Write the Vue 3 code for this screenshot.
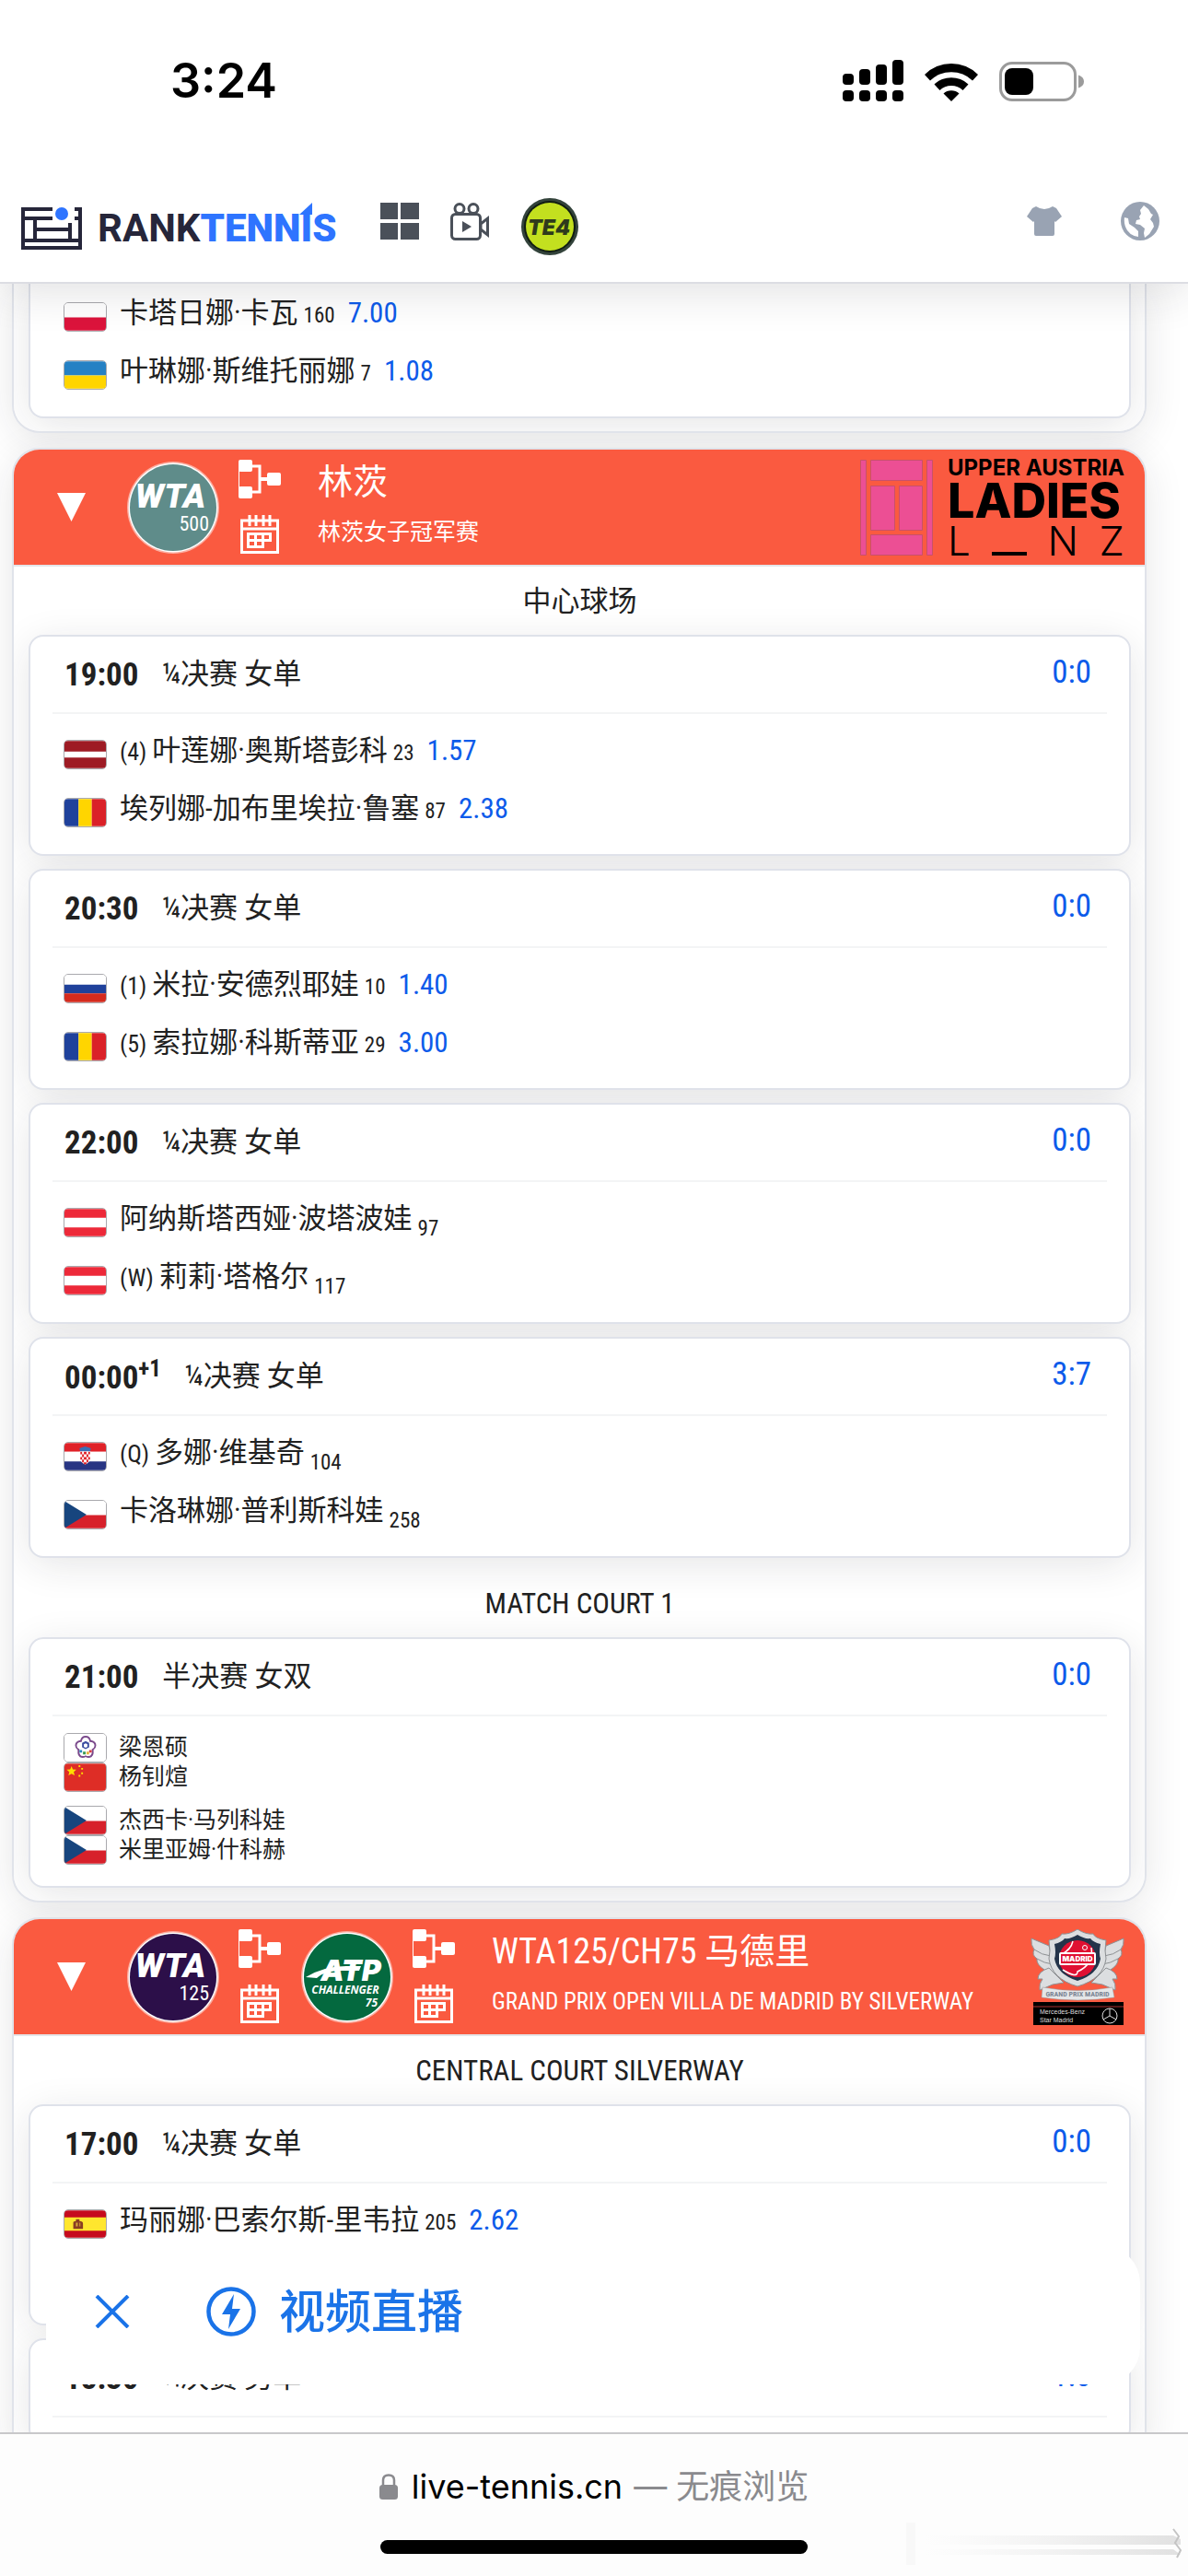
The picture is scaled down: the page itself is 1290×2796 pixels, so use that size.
<template>
  <div class="screen">
    <div class="status">
      <span class="clock">3:24</span>
      <div class="status-icons">
        <svg width="66" height="46" viewBox="0 0 66 46">
          <rect x="0" y="15" width="12" height="12" rx="4" />
          <rect x="18" y="10" width="12" height="17" rx="4" />
          <rect x="36" y="5" width="12" height="22" rx="4" />
          <rect x="54" y="0" width="12" height="27" rx="4" />
          <rect v-for="x in [0, 18, 36, 54]" :key="x" :x="x" y="33" width="12" height="12" rx="4" />
        </svg>
        <svg width="58" height="43" viewBox="0 0 58 43">
          <path d="M0 14a41 41 0 0 1 58 0l-6 6.500a33 33 0 0 0-46 0z" />
          <path d="M10.500 24.500a27 27 0 0 1 37 0l-6 6.500a18 18 0 0 0-25 0z" />
          <path d="M20.500 34.500a13 13 0 0 1 17 0L29 43z" />
        </svg>
        <svg width="92" height="43" viewBox="0 0 92 43">
          <rect x="1.500" y="1.500" width="81" height="40" rx="12.500" fill="none" stroke="#9b9b9b" stroke-width="3" />
          <rect x="6" y="7" width="31" height="29" rx="8" />
          <path d="M86 14.500q6 2 6 7t-6 7z" fill="#9b9b9b" />
        </svg>
      </div>
    </div>

    <header class="topbar">
      <a href="#" class="brand">
        <svg width="66" height="46" viewBox="0 0 66 46" fill="none" stroke="#26263a" stroke-width="4">
          <path d="M34 2H2v42h62V2H58M2 12h32M58 12h6M2 36h62M15 12v24M15 24h38M53 17v19" />
          <circle cx="44" cy="7" r="7" fill="#2e74ff" stroke="none" />
        </svg>
        <span class="wordmark">RANK<b>TENNIS</b>
          <svg class="pennant" width="14" height="13" viewBox="0 0 14 13"><path d="M14 0v13H0z" fill="#2e74ff" /></svg>
        </span>
      </a>
      <button class="icon-btn grid-btn" aria-label="grid">
        <svg width="42" height="40" viewBox="0 0 42 40" fill="#4a5059">
          <path d="M0 0h19v18H0zM22 0h20v18H22zM0 22h19v18H0zM22 22h20v18H22z" />
        </svg>
      </button>
      <button class="icon-btn camera-btn" aria-label="video">
        <svg width="42" height="41" viewBox="0 0 42 41" fill="none" stroke="#4a5059" stroke-width="3">
          <circle cx="10" cy="6.500" r="5" />
          <circle cx="25" cy="6.500" r="5" />
          <rect x="1.500" y="12.500" width="31" height="27" rx="4" />
          <path d="M33 23l7.500-6v18L33 29z" />
          <path d="M13 20l10 6-10 6z" fill="#4a5059" stroke="none" />
        </svg>
      </button>
      <button class="icon-btn te4-btn" aria-label="TE4">
        <svg width="64" height="64" viewBox="0 0 64 64">
          <circle cx="32" cy="32" r="31" fill="#33433b" />
          <circle cx="32" cy="32" r="28" fill="#111d12" />
          <circle cx="32" cy="32" r="26" fill="#c3e01f" />
          <text x="31" y="41" text-anchor="middle" class="te4">TE4</text>
        </svg>
      </button>
      <span class="spacer"></span>
      <button class="icon-btn shirt-btn" aria-label="theme">
        <svg width="38" height="32" viewBox="0 0 38 32" fill="#99a3b3">
          <path d="M10 0q9 6 18 0l4 2 6 9-7 6-1-1v14q0 2-2 2H10q-2 0-2-2V16l-1 1-7-6 6-9z" />
        </svg>
      </button>
      <button class="icon-btn" aria-label="language">
        <svg width="42" height="42" viewBox="0 0 42 42">
          <circle cx="21" cy="21" r="21" fill="#99a3b3" />
          <path d="M25 4l5 4 3 5 2 1-3 5 3 4 1 4-5 8-5 4-1-5 1-5-5-4-5-1 1-4 4-1-1-3 2-3-1-4z" fill="#fff" />
          <path d="M4 17l4 1 1 6 6 4 4 4v6q-8-1-12-7t-3-14z" fill="#fff" />
        </svg>
      </button>
    </header>

    <main class="page">
      <section v-for="(event, e) in events" :key="e" class="event" :class="{ continued: !event.title }">
        <div v-if="event.title" class="event-head">
          <button class="toggle" aria-label="collapse">
            <svg width="31" height="31" viewBox="0 0 31 31"><path d="M0 0h31L15.500 31z" fill="#fff" /></svg>
          </button>
          <div class="tours">
            <div v-for="tour in event.tours" :key="tour.name" class="tour">
              <svg width="100" height="100" viewBox="0 0 100 100">
                <circle cx="50" cy="50" r="50" fill="#fff" fill-opacity=".5" />
                <circle cx="50" cy="50" r="48.500" fill="#fff" />
                <circle cx="50" cy="50" r="47" :fill="tour.color" />
                <template v-if="tour.name === 'WTA'">
                  <text x="47" y="50" text-anchor="middle" class="wta">WTA</text>
                  <text x="89" y="75" text-anchor="end" class="level">{{ tour.level }}</text>
                </template>
                <template v-else>
                  <path d="M5 50q20-12 44-12h16l-2 5H45q-20 0-28 8z" fill="#fff" />
                  <text x="54" y="54" text-anchor="middle" class="atp">ATP</text>
                  <text x="48" y="68" text-anchor="middle" class="challenger">CHALLENGER</text>
                  <text x="83" y="82" text-anchor="end" class="challenger">{{ tour.level }}</text>
                </template>
              </svg>
              <div class="tour-links">
                <a href="#" aria-label="draw">
                  <svg width="46" height="42" viewBox="0 0 46 42" fill="#fff">
                    <rect width="15" height="13" rx="2" />
                    <rect y="29" width="15" height="13" rx="2" />
                    <rect x="31" y="14" width="15" height="14" rx="2" />
                    <path d="M.500 5v32" fill="none" stroke="#fff" stroke-width="1" />
                    <path d="M15 7h8v28h-8" fill="none" stroke="#fff" stroke-width="3" />
                    <path d="M23 21h8" stroke="#fff" stroke-width="4" />
                  </svg>
                </a>
                <a href="#" aria-label="schedule">
                  <svg width="46" height="42" viewBox="0 0 46 42" fill="none" stroke="#fff" stroke-width="3">
                    <path d="M3.500 6h39v34.500h-39zM3.500 15h39M12 0v12M19 0v12M27 0v12M34 0v12" />
                    <path d="M10.500 20.500h24v7h-8v7h-16zM10.500 27.500h16M18.500 20.500v14M26.500 20.500v7" />
                  </svg>
                </a>
              </div>
            </div>
          </div>
          <div class="titles">
            <h2>{{ event.title }}</h2>
            <p>{{ event.subtitle }}</p>
          </div>

          <div v-if="event.logo === 'linz'" class="linz">
            <svg width="79" height="104" viewBox="0 0 79 104" fill="#ec4f94" stroke="#c9506a" stroke-width="1">
              <path d="M.500.500h6v103h-6zM72.500.500h6v103h-6zM11.500.500h56v22h-56zM11.500 28.500h26v48h-26zM42.500 28.500h25v48h-25zM11.500 81.500h56v22h-56z" />
            </svg>
            <div class="linz-text">
              <span class="linz-top">UPPER AUSTRIA</span>
              <span class="linz-mid">LADIES</span>
              <span class="linz-low"><i>L</i><i class="dash"></i><i>N</i><i>Z</i></span>
            </div>
          </div>

          <svg v-if="event.logo === 'madrid'" width="102" height="104" viewBox="0 0 102 104">
            <g fill="#dcdee0" stroke="#8e9194" stroke-width="1">
              <path d="M1 10l19 8 7 30-8 2-4-6q-9-6-8-12Q1 28 4 22Q0 17 1 10z" />
              <path d="M101 10l-19 8-7 30 8 2 4-6q9-6 8-12 6-4 3-10 4-5 3-12z" />
              <path d="M20 42Q8 46 8 54h5q-4 5-3 12l14-6 12-2zM82 42q12 4 12 12h-5q4 5 3 12l-14-6-12-2z" />
              <path d="M4 22q8 6 18 7M7 32q8 5 17 6M98 22q-8 6-18 7M95 32q-8 5-17 6" fill="none" />
              <path d="M51 0q9 6 17 5 2 5 14 7-2 12 0 20-3 22-31 30Q23 54 20 32q2-8 0-20 12-2 14-7 8 1 17-5z" />
            </g>
            <path d="M51 6q8 5 14 4 3 4 11 6-2 10 0 16-3 17-25 24-22-7-25-24 2-6 0-16 8-2 11-6 6 1 14-4z" fill="#24344a" />
            <circle cx="51" cy="32" r="20" fill="#e01032" />
            <path d="M35 44q16 10 16 2 18-8 15-26M34 27q10-5 12-14" fill="none" stroke="#fff" stroke-width="1.500" />
            <circle cx="59" cy="20" r="2.500" fill="none" stroke="#fff" />
            <rect x="31" y="25" width="40" height="14" rx="2" fill="#fff" />
            <rect x="33" y="27" width="36" height="10" fill="#e01032" />
            <text x="51" y="35" text-anchor="middle" class="madrid-name">MADRID</text>
            <path d="M13 63q38 7 76 0l2 11q-40 6-79 0z" fill="#e4e6e8" stroke="#999" stroke-width=".500" />
            <text x="51" y="73" text-anchor="middle" class="madrid-ribbon">GRAND PRIX MADRID</text>
            <path d="M3 79h98v25H3z" />
            <path d="M3 84h98" stroke="#a33" stroke-width="1" />
            <text x="10" y="92" class="madrid-sponsor">Mercedes-Benz</text>
            <text x="10" y="101" class="madrid-sponsor">Star Madrid</text>
            <path d="M86 86v8l-7 4M86 94l7 4" fill="none" stroke="#ddd" />
            <circle cx="86" cy="94" r="8" fill="none" stroke="#ddd" />
          </svg>
        </div>

        <div class="event-body">
          <template v-for="(court, c) in event.courts" :key="c">
            <h3 v-if="court.name" class="court">{{ court.name }}</h3>
            <article v-for="(match, m) in court.matches" :key="m" class="match">
              <div v-if="match.time" class="match-head">
                <span class="time">{{ match.time }}<sup v-if="match.nextDay">+1</sup></span>
                <span class="round">{{ match.round }}</span>
                <a href="#" class="score">{{ match.h2h }}</a>
              </div>
              <div v-if="match.pairs" class="pairs">
                <div v-for="(pair, p) in match.pairs" :key="p" class="pair">
                  <div v-for="player in pair" :key="player.name" class="partner">
                    <svg class="flag" width="47" height="32" viewBox="0 0 47 31">
                      <path v-for="(shape, s) in flags[player.flag]" :key="s" :d="shape[1]" :fill="shape[0]" />
                    </svg>
                    <span>{{ player.name }}</span>
                  </div>
                </div>
              </div>
              <div v-else class="players">
                <div v-for="player in match.players" :key="player.name" class="player">
                  <svg class="flag" width="47" height="32" viewBox="0 0 47 31">
                    <path v-for="(shape, s) in flags[player.flag]" :key="s" :d="shape[1]" :fill="shape[0]" />
                  </svg>
                  <div class="player-line">
                    <span v-if="player.seed" class="seed">({{ player.seed }})</span>
                    <span>{{ player.name }}</span>
                    <span class="rank" :class="{ low: !player.odds }">{{ player.rank }}</span>
                    <a v-if="player.odds" href="#" class="odds">{{ player.odds }}</a>
                  </div>
                </div>
              </div>
            </article>
          </template>
        </div>
      </section>

      <div class="live">
        <button class="close" aria-label="close">
          <svg width="38" height="36" viewBox="0 0 38 36"><path d="M2 1l34 34M36 1L2 35" stroke="#1a73e8" stroke-width="4" /></svg>
        </button>
        <a href="#" class="live-link">
          <svg width="54" height="54" viewBox="0 0 54 54">
            <circle cx="27" cy="27" r="24.500" fill="none" stroke="#1a73e8" stroke-width="4.500" />
            <path d="M30 8L17 30h9l-2 16 13-22h-9z" fill="#1a73e8" />
          </svg>
          <span>视频直播</span>
        </a>
      </div>
    </main>

    <footer class="safari">
      <div class="address">
        <svg width="20" height="28" viewBox="0 0 20 28">
          <path d="M4 13V7q0-5.500 6-5.500T16 7v6" fill="none" stroke="#8a8a8e" stroke-width="2.500" />
          <rect y="12" width="20" height="16" rx="3.500" fill="#8a8a8e" />
        </svg>
        <span class="host">live-tennis.cn</span>
        <span class="private">— 无痕浏览</span>
      </div>
      <div class="home"></div>
      <svg class="smudge" width="300" height="46" viewBox="0 0 300 46">
        <defs>
          <linearGradient id="fade">
            <stop offset="0" stop-color="#ddd" stop-opacity="0" />
            <stop offset="1" stop-color="#c4c4c4" />
          </linearGradient>
        </defs>
        <rect width="10" height="46" fill="#f8f8f8" />
        <path d="M20 14h270l8 4v6H20zM20 29h270l8 6H20z" fill="url(#fade)" opacity=".5" />
        <path d="M290 7l6 8-4 7 6 8-4 8" fill="none" stroke="#c4c4c4" stroke-width="2" />
      </svg>
    </footer>
  </div>
</template>

<script setup>
// Each flag is a list of [fill, path] drawn on a 47x31 field
const romania = [
  ["#1f419b", "M0 0h16v31H0z"],
  ["#ffd500", "M16 0h15v31H16z"],
  ["#da2128", "M31 0h16v31H31z"],
];
const flags = {
  pl: [
    ["#fff", "M0 0h47v16H0z"],
    ["#dc143c", "M0 16h47v15H0z"],
  ],
  ua: [
    ["#2581c4", "M0 0h47v16H0z"],
    ["#ffd500", "M0 16h47v15H0z"],
  ],
  lv: [
    ["#9e1b24", "M0 0h47v31H0z"],
    ["#fff", "M0 12h47v7H0z"],
  ],
  ro: romania,
  ru: [
    ["#fff", "M0 0h47v11H0z"],
    ["#1f419b", "M0 11h47v10H0z"],
    ["#d52b1e", "M0 21h47v10H0z"],
  ],
  at: [
    ["#ed2939", "M0 0h47v31H0z"],
    ["#fff", "M0 10h47v11H0z"],
  ],
  hr: [
    ["#e02128", "M0 0h47v10H0z"],
    ["#fff", "M0 10h47v11H0z"],
    ["#283583", "M0 21h47v10H0z"],
    ["#3b6fb5", "M17 6l3-1 3.500-1 3.500 1 3 1-1 4H18z"],
    ["#fff", "M17.500 9.500h12v9q-1 4-6 6-5-2-6-6z"],
    [
      "#e02128",
      "M18 10h2v3h-2zM22 10h3v3h-3zM27 10h2v3h-2zM20 13h2v3h-2zM25 13h2v3h-2zM18 16h2v3h-2zM22 16h3v3h-3zM27 16h2v3h-2zM20 19h2v3h-2zM25 19h2v3h-2zM22 22h3v2h-3z",
    ],
  ],
  cz: [
    ["#fff", "M0 0h47v16H0z"],
    ["#d7212b", "M0 16h47v15H0z"],
    ["#17457e", "M0 0l25 15.500L0 31z"],
  ],
  tpe: [
    ["#fff", "M0 0h47v31H0z"],
    ["#7b4a8c", "M24 2q5 0 6 5 6 1 6 6 0 3-3 5 1 8-5 9-3 0-4-1-1 1-4 1-6-1-5-9-3-2-3-5 0-5 6-6 1-5 6-5z"],
    ["#fff", "M24 4q4 0 4.500 5 5.500 0 5.500 4 0 3-3 4 1 8-4 8-2 0-3-1-1 1-3 1-5 0-4-8-3-1-3-4 0-4 5.500-4Q20 4 24 4z"],
    ["#3c4da0", "M24 8l4 2v5l-4 2-4-2v-5z"],
    ["#fff", "M24 10.500l2 1v3l-2 1-2-1v-3z"],
    ["#2a8ac0", "M17 18h3v3h-3z"],
    ["#3a9a50", "M21 20h3v3h-3z"],
    ["#d7404b", "M28 18h3v3h-3z"],
    ["#e6b53c", "M25 20h3v3h-3z"],
  ],
  cn: [
    ["#de2d26", "M0 0h47v31H0z"],
    ["#ffde00", "M8 3l1.500 3.500 4 .500-3 2.500 1 4L8 11.500l-3.500 2 1-4-3-2.500 4-.500z"],
    ["#ffde00", "M16 2h2v2h-2zM19 5h2v2h-2zM19 10h2v2h-2zM16 13h2v2h-2z"],
  ],
  es: [
    ["#c60b1e", "M0 0h47v31H0z"],
    ["#ffe62e", "M0 8h47v15H0z"],
    ["#8a3d22", "M10 21v-7q0-2 3-2v-2h4v2q4 0 4 3v6z"],
    ["#d9a93c", "M13 14h2v4h-2zM17 14h1v4h-1z"],
  ],
};

const events = [
  {
    courts: [
      {
        matches: [
          {
            players: [
              { flag: "pl", name: "卡塔日娜·卡瓦", rank: 160, odds: "7.00" },
              { flag: "ua", name: "叶琳娜·斯维托丽娜", rank: 7, odds: "1.08" },
            ],
          },
        ],
      },
    ],
  },
  {
    title: "林茨",
    subtitle: "林茨女子冠军赛",
    logo: "linz",
    tours: [{ name: "WTA", level: 500, color: "#5f8c8a" }],
    courts: [
      {
        name: "中心球场",
        matches: [
          {
            time: "19:00",
            round: "¼决赛 女单",
            h2h: "0:0",
            players: [
              { flag: "lv", seed: 4, name: "叶莲娜·奥斯塔彭科", rank: 23, odds: "1.57" },
              { flag: "ro", name: "埃列娜-加布里埃拉·鲁塞", rank: 87, odds: "2.38" },
            ],
          },
          {
            time: "20:30",
            round: "¼决赛 女单",
            h2h: "0:0",
            players: [
              { flag: "ru", seed: 1, name: "米拉·安德烈耶娃", rank: 10, odds: "1.40" },
              { flag: "ro", seed: 5, name: "索拉娜·科斯蒂亚", rank: 29, odds: "3.00" },
            ],
          },
          {
            time: "22:00",
            round: "¼决赛 女单",
            h2h: "0:0",
            players: [
              { flag: "at", name: "阿纳斯塔西娅·波塔波娃", rank: 97 },
              { flag: "at", seed: "W", name: "莉莉·塔格尔", rank: 117 },
            ],
          },
          {
            time: "00:00",
            nextDay: true,
            round: "¼决赛 女单",
            h2h: "3:7",
            players: [
              { flag: "hr", seed: "Q", name: "多娜·维基奇", rank: 104 },
              { flag: "cz", name: "卡洛琳娜·普利斯科娃", rank: 258 },
            ],
          },
        ],
      },
      {
        name: "MATCH COURT 1",
        matches: [
          {
            time: "21:00",
            round: "半决赛 女双",
            h2h: "0:0",
            pairs: [
              [
                { flag: "tpe", name: "梁恩硕" },
                { flag: "cn", name: "杨钊煊" },
              ],
              [
                { flag: "cz", name: "杰西卡·马列科娃" },
                { flag: "cz", name: "米里亚姆·什科赫" },
              ],
            ],
          },
        ],
      },
    ],
  },
  {
    title: "WTA125/CH75 马德里",
    subtitle: "GRAND PRIX OPEN VILLA DE MADRID BY SILVERWAY",
    logo: "madrid",
    tours: [
      { name: "WTA", level: 125, color: "#2c0f49" },
      { name: "ATP", level: 75, color: "#04693f" },
    ],
    courts: [
      {
        name: "CENTRAL COURT SILVERWAY",
        matches: [
          {
            time: "17:00",
            round: "¼决赛 女单",
            h2h: "0:0",
            players: [
              { flag: "es", name: "玛丽娜·巴索尔斯-里韦拉", rank: 205, odds: "2.62" },
              { flag: "at", name: "" },
            ],
          },
          { time: "18:30", round: "¼决赛 男单", h2h: "1:0", players: [] },
        ],
      },
    ],
  },
];
</script>

<style>
body {
  margin: 0;
  background: #fff;
}
</style>

<style scoped>
.screen {
  display: flex;
  flex-direction: column;
  height: 100vh;
  overflow: hidden;
  background: #fff;
  color: #212121;
  font-family: "Roboto Condensed", "Liberation Sans Narrow", Roboto, "Noto Sans CJK SC", sans-serif;
  font-size: 31px;
}
svg {
  display: block;
  flex: none;
}
a {
  color: #0d5bea;
  text-decoration: none;
}
button {
  padding: 0;
  border: 0;
  background: none;
  cursor: pointer;
}
h2,
h3,
p {
  margin: 0;
  font-weight: 400;
}

.status {
  position: relative;
  z-index: 3;
  flex: none;
  display: flex;
  justify-content: space-between;
  align-items: center;
  height: 56px;
  padding: 60px 113px 64px 185px;
  background: #fff;
}
.clock {
  color: #000;
  font: 600 52px/56px Inter, sans-serif;
}
.status-icons {
  display: flex;
  align-items: center;
  gap: 23px;
}

.topbar {
  position: relative;
  z-index: 2;
  flex: none;
  display: flex;
  align-items: flex-start;
  height: 92px;
  padding: 34px 31px 0 23px;
  background: #fff;
  border-bottom: 2px solid #dcdde3;
  box-shadow: 0 8px 48px rgba(33, 37, 41, 0.14);
}
.brand {
  display: flex;
  align-items: center;
  gap: 17px;
  height: 68px;
}
.wordmark {
  position: relative;
  color: #26263a;
  font: 700 42px/48px Roboto, sans-serif;
}
.wordmark b {
  color: #2e74ff;
}
.pennant {
  position: absolute;
  right: 26px;
  top: -4px;
}
.icon-btn {
  display: flex;
  align-items: center;
  height: 52px;
}
.grid-btn {
  margin-left: 48px;
}
.camera-btn {
  margin-left: 34px;
}
.te4-btn {
  height: 64px;
  margin-left: 34px;
}
.te4 {
  fill: #2f3b1c;
  font: italic 900 23px Inter, sans-serif;
}
.spacer {
  flex: 1;
}
.shirt-btn {
  margin-right: 64px;
}

.page {
  position: relative;
  isolation: isolate;
  flex: 1;
  min-height: 0;
  overflow: hidden;
}
.event {
  position: relative;
  margin: 0 45px 16px 13px;
  border: 2px solid #e0e3ea;
  border-radius: 30px;
}
/* Shadows sit behind so that neighbours never darken each other */
.event::before,
.match::before {
  content: "";
  position: absolute;
  inset: 0;
  z-index: -1;
  border-radius: inherit;
  box-shadow: 0 8px 44px rgba(33, 37, 41, 0.12);
}
.event-head {
  display: flex;
  align-items: center;
  height: 125px;
  padding: 0 22px 0 47px;
  border-bottom: 2px solid #e4e6ea;
  border-radius: 28px 28px 0 0;
  background: #fa5a40;
  color: #fff;
}
.toggle {
  margin-right: 45px;
}
.tours {
  display: flex;
  gap: 22px;
}
.tour {
  display: flex;
  align-items: center;
  gap: 21px;
}
.tour-links {
  display: flex;
  flex-direction: column;
  gap: 18px;
  padding-bottom: 2px;
}
.wta {
  fill: #fff;
  font: italic 900 37px Roboto, sans-serif;
}
.level {
  fill: #fff;
  font: 22px "Roboto Condensed", "Liberation Sans Narrow", Roboto, sans-serif;
}
.atp {
  fill: #fff;
  font: italic 900 32px Inter, sans-serif;
}
.challenger {
  fill: #fff;
  font: italic 700 12px "Open Sans", sans-serif;
}
.titles {
  flex: 1;
  margin-left: 40px;
  padding-bottom: 4px;
  white-space: nowrap;
}
.titles h2 {
  font-size: 38px;
  line-height: 58px;
}
.titles p {
  font-size: 25px;
  line-height: 52px;
}
.linz {
  display: flex;
  gap: 16px;
}
.linz-text {
  display: flex;
  flex-direction: column;
  justify-content: space-between;
  width: 192px;
  height: 104px;
  color: #000;
  white-space: nowrap;
}
.linz-top {
  font: 700 24px/18px Inter, sans-serif;
}
.linz-mid {
  font: 800 52px/36px Inter, sans-serif;
}
.linz-low {
  display: flex;
  justify-content: space-between;
  font: 300 44px/32px Inter, sans-serif;
}
.linz-low i {
  font-style: normal;
}
.linz-low .dash {
  align-self: flex-end;
  width: 38px;
  height: 4px;
  background: #000;
}
.madrid-name {
  fill: #fff;
  font: 900 8px Inter, sans-serif;
}
.madrid-ribbon {
  fill: #7b8594;
  font: 700 8px "Roboto Condensed", sans-serif;
}
.madrid-sponsor {
  fill: #ddd;
  font: 7px "Liberation Sans", sans-serif;
}

.event-body {
  isolation: isolate;
  overflow: hidden;
  padding: 2px 15px 0 16px;
  border-radius: 0 0 28px 28px;
  background: #fff;
}
.court {
  font-size: 31px;
  line-height: 72px;
  text-align: center;
}
.match {
  position: relative;
  margin-bottom: 14px;
  padding: 0 24px;
  border: 2px solid #dfe2ea;
  border-radius: 16px;
  background: #fff;
}
.match-head {
  display: flex;
  align-items: center;
  height: 82px;
  padding: 0 17px 0 13px;
  border-bottom: 2px solid #f3f4f5;
}
.time {
  font-size: 35px;
  font-weight: 700;
}
.time sup {
  font-size: 25px;
  line-height: 1;
}
.round {
  flex: 1;
  margin-left: 26px;
  padding-bottom: 8px;
}
.score {
  padding-bottom: 6px;
  font-size: 35px;
}
.players {
  padding: 12px 12px 14px;
}
.player {
  display: flex;
  align-items: center;
  gap: 14px;
  height: 63px;
}
.player-line {
  display: flex;
  align-items: baseline;
  gap: 6px;
  padding-bottom: 4px;
  line-height: 48px;
}
.flag {
  box-sizing: border-box;
  border: 1px solid #a9a9ad;
  border-radius: 5px;
}
.seed {
  font-size: 26px;
}
.rank {
  font-size: 23px;
}
.rank.low {
  position: relative;
  top: 8px;
}
.odds {
  margin-left: 8px;
}
.pairs {
  display: flex;
  flex-direction: column;
  gap: 15px;
  padding: 18px 12px 23px;
}
.partner {
  display: flex;
  align-items: center;
  gap: 13px;
  height: 32px;
  font-size: 25px;
  line-height: 32px;
}
.continued {
  border-top: 0;
  border-radius: 0 0 30px 30px;
}
.continued .event-body {
  padding-top: 0;
}
.continued .match {
  border-top: 0;
  border-radius: 0 0 16px 16px;
}
.continued .players {
  padding-top: 4px;
}

.live {
  position: absolute;
  left: 50px;
  right: 52px;
  bottom: 52px;
  z-index: 1;
  display: flex;
  align-items: center;
  gap: 83px;
  height: 150px;
  padding: 0 0 8px 53px;
  border-radius: 0 40px 40px 0;
  background: #fff;
  box-sizing: border-box;
}
.live-link {
  display: flex;
  align-items: center;
  gap: 25px;
  color: #1a73e8;
  font-size: 50px;
  font-weight: 500;
}
.live-link span {
  padding-bottom: 8px;
}

.safari {
  position: relative;
  z-index: 2;
  flex: none;
  display: flex;
  flex-direction: column;
  align-items: center;
  justify-content: space-between;
  box-sizing: border-box;
  height: 156px;
  padding: 30px 0 24px;
  border-top: 2px solid #c8c8ca;
  background: #fdfdfd;
}
.address {
  display: flex;
  align-items: center;
  gap: 12px;
  font: 36px/54px Inter, "Noto Sans CJK SC", sans-serif;
}
.host {
  margin-left: 3px;
  color: #000;
}
.private {
  color: #8a8a8e;
}
.home {
  width: 36%;
  height: 15px;
  border-radius: 8px;
  background: #000;
}
.smudge {
  position: absolute;
  right: 6px;
  bottom: 12px;
}
</style>
